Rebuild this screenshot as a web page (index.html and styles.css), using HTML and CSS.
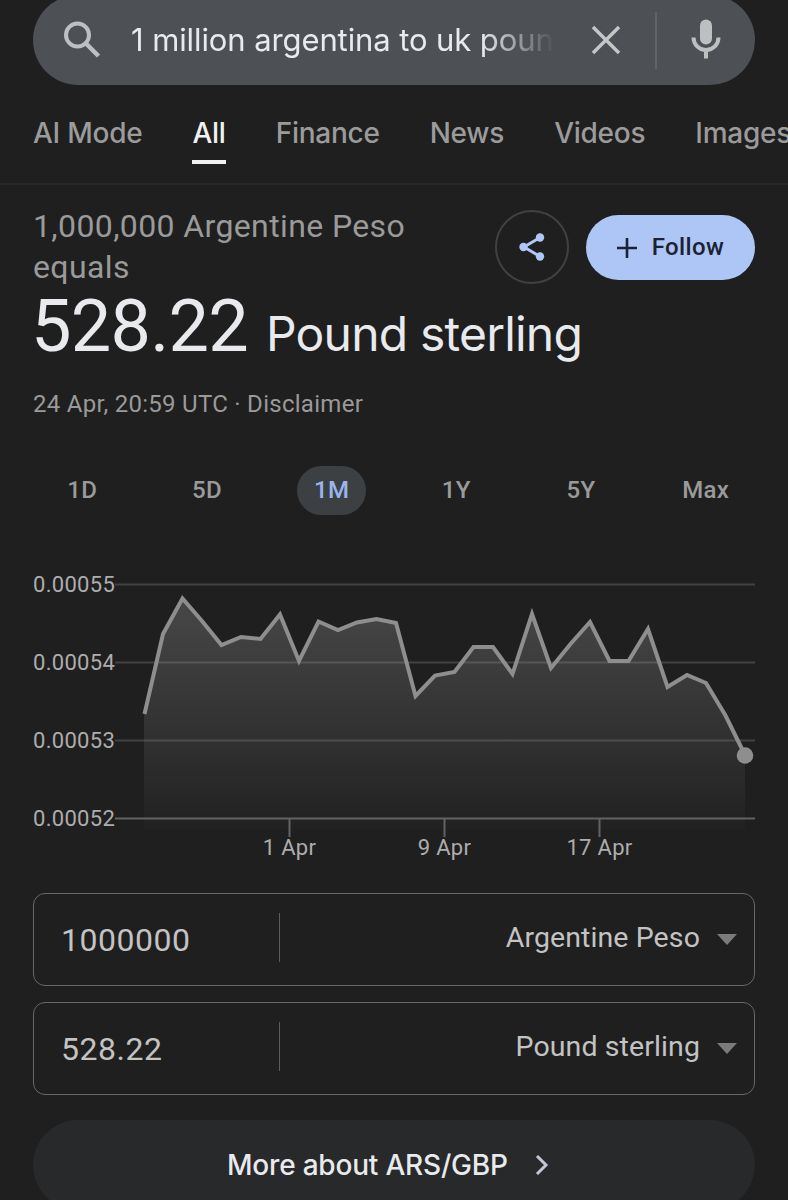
FILE: index.html
```
<!DOCTYPE html>
<html lang="en">
<head>
    <meta charset="UTF-8">
    <meta name="viewport" content="width=device-width, initial-scale=1.0">
    <title>1 million argentina to uk pound</title>
    <link rel="stylesheet" href="styles.css">
</head>
<body>
    <div class="search">
        <svg class="search-icon" width="38" height="38" viewBox="0 0 38 38">
            <circle cx="14.5" cy="14" r="11.5" fill="none" stroke="#bdbfc1" stroke-width="4"/>
            <path d="M22.5 22L35.500 35" stroke="#bdbfc1" stroke-width="4.5"/>
        </svg>
        <div class="query">1 million argentina to uk pound</div>
        <svg class="clear" width="30" height="30" viewBox="0 0 30 30">
            <path d="M2 2L28 28M28 2L2 28" stroke="#c4c6c8" stroke-width="3.4"/>
        </svg>
        <div class="search-line"></div>
        <svg class="mic" width="30" height="40" viewBox="0 0 30 40">
            <rect x="9" y="-0.5" width="12" height="25" rx="6" fill="#bdbfc1"/>
            <path d="M2.5 17.5a12.5 12.5 0 0 0 25 0M15 30v8.500" fill="none" stroke="#bdbfc1" stroke-width="4"/>
        </svg>
    </div>

    <nav class="tabs">
        <a class="tab">AI Mode</a>
        <a class="tab active">All</a>
        <a class="tab">Finance</a>
        <a class="tab">News</a>
        <a class="tab">Videos</a>
        <a class="tab">Images</a>
    </nav>

    <main class="content">
        <div class="top">
            <div class="from">1,000,000 Argentine Peso equals</div>
            <button class="share">
                <svg width="26" height="28" viewBox="0 0 26 28">
                    <path d="M21 4.500L5 14L21 23.500" fill="none" stroke="#aec7f7" stroke-width="3"/>
                    <circle cx="21" cy="4.500" r="4.200" fill="#aec7f7"/>
                    <circle cx="4.500" cy="14" r="4.200" fill="#aec7f7"/>
                    <circle cx="21" cy="23.500" r="4.200" fill="#aec7f7"/>
                </svg>
            </button>
            <button class="follow">
                <svg width="20" height="20" viewBox="0 0 20 20">
                    <path d="M10 0v20M0 10h20" stroke="#1b2233" stroke-width="2.600"/>
                </svg>
                <span>Follow</span>
            </button>
        </div>
        <div class="result"><span class="amount">528.22</span><span class="currency">Pound sterling</span></div>
        <div class="date">24 Apr, 20:59 UTC · Disclaimer</div>

        <div class="ranges">
            <div class="range">1D</div>
            <div class="range">5D</div>
            <div class="range selected">1M</div>
            <div class="range">1Y</div>
            <div class="range">5Y</div>
            <div class="range">Max</div>
        </div>

        <svg class="chart" width="722" height="310" viewBox="33 560 722 310">
            <defs>
                <linearGradient id="fade" gradientUnits="userSpaceOnUse" x1="0" y1="598" x2="0" y2="830">
                    <stop offset="0" stop-color="#8f8f8f" stop-opacity="0.36"/>
                    <stop offset="1" stop-color="#8f8f8f" stop-opacity="0.02"/>
                </linearGradient>
            </defs>
            <!-- grid -->
            <path d="M115 584.500H755M115 662.500H755M115 740.500H755" stroke="#414244" stroke-width="2"/>
            <!-- area and line -->
            <path fill="url(#fade)" d="M144 830V713L163 634L182.500 598.500L202 621L221.500 645L241 637L260.500 639L280 614.500L299 661L318.500 621.500L338 630L357 622.500L376.500 619L396 623L415.500 696L435 675.500L454.500 672L473.500 647L493 647L512.500 674L532 614L551 668L570.500 644L590 622L609.500 661L628.500 661L648 629L667.500 687L687 675L706 683L725.500 715.500L745 755V830Z"/>
            <path d="M115 818.500H755M289.500 819V837M444.500 819V837M599.500 819V837" fill="none" stroke="#636363" stroke-width="2"/>
            <path class="line" d="M144.500 714L163 634L182.500 598.500L202 621L221.500 645L241 637L260.500 639L280 614.500L299 661L318.500 621.500L338 630L357 622.500L376.500 619L396 623L415.500 696L435 675.500L454.500 672L473.500 647L493 647L512.500 674L532 614L551 668L570.500 644L590 622L609.500 661L628.500 661L648 629L667.500 687L687 675L706 683L725.500 715.500L745 755"/>
            <circle cx="745" cy="755.500" r="8.300" fill="#8e8e8e"/>
            <g class="y-labels">
                <text x="33" y="592">0.00055</text>
                <text x="33" y="670">0.00054</text>
                <text x="33" y="748">0.00053</text>
                <text x="33" y="826">0.00052</text>
            </g>
            <g class="x-labels">
                <text x="289.500" y="855">1 Apr</text>
                <text x="444.500" y="855">9 Apr</text>
                <text x="599.500" y="855">17 Apr</text>
            </g>
        </svg>

        <div class="field">
            <div class="value">1000000</div>
            <div class="unit">Argentine Peso</div>
            <svg width="20" height="12" viewBox="0 0 20 12"><path d="M0 0H20L10 11Z" fill="#7b7b7b"/></svg>
        </div>
        <div class="field">
            <div class="value">528.22</div>
            <div class="unit">Pound sterling</div>
            <svg width="20" height="12" viewBox="0 0 20 12"><path d="M0 0H20L10 11Z" fill="#7b7b7b"/></svg>
        </div>

        <div class="more">
            <span>More about ARS/GBP</span>
            <svg width="14" height="22" viewBox="0 0 14 22"><path d="M2 2L11 11L2 20" fill="none" stroke="#c3c6d6" stroke-width="3"/></svg>
        </div>
    </main>
</body>
</html>
```
FILE: styles.css
```
*{
  box-sizing: border-box;
}
html{
  overflow: hidden;
}
body{
  margin: 0;
  height: 1200px;
  overflow: hidden;
  background-color: #1f1f1f;
  font-family: Roboto, sans-serif;
  color: #e8eaed;
}
/* search bar */
.search{
  display: flex;
  align-items: center;
  height: 90px;
  margin: -5px 33px 0;
  padding: 0 34px 0 30px;
  border-radius: 45px;
  background-color: #4d5156;
}
.search svg{
  flex: none;
}
.query{
  width: 426px;
  margin-left: 30px;
  overflow: hidden;
  white-space: nowrap;
  font-family: Inter, sans-serif;
  font-size: 31px;
  line-height: 50px;
  letter-spacing: -0.1px;
  -webkit-mask-image: linear-gradient(to right, #000 350px, transparent 424px);
  mask-image: linear-gradient(to right, #000 350px, transparent 424px);
}
.clear{
  margin-left: 34px;
}
.search-line{
  width: 2px;
  height: 57px;
  margin-left: 34px;
  background-color: #606468;
}
.mic{
  margin-left: 34px;
  overflow: visible;
}
/* tabs */
.tabs{
  display: flex;
  gap: 50px;
  height: 100px;
  padding: 26px 0 0 33px;
  border-bottom: 2px solid #27272c;
  overflow: hidden;
  white-space: nowrap;
}
.tab{
  height: 53px;
  font-family: Inter, sans-serif;
  font-size: 28px;
  font-weight: 500;
  line-height: 45px;
  letter-spacing: -0.25px;
  color: #9b9b9b;
}
.active{
  color: #f1f1f1;
  border-bottom: 4px solid #f1f1f1;
}
/* conversion */
.content{
  padding: 0 33px;
}
.top{
  display: flex;
  height: 103px;
  padding-top: 21px;
}
.from{
  width: 462px;
  padding-right: 60px;
  font-size: 32px;
  line-height: 41px;
  letter-spacing: 0.38px;
  color: #9a9a9a;
}
button{
  display: flex;
  align-items: center;
  justify-content: center;
  padding: 0;
  border: none;
}
.share{
  width: 74px;
  height: 74px;
  margin-top: 4px;
  border: 2px solid #414141;
  border-radius: 50%;
  background: none;
}
.follow{
  gap: 15px;
  width: 169px;
  height: 65px;
  margin: 9px 0 0 17px;
  border-radius: 33px;
  background-color: #aec6f6;
  color: #1b2233;
  font-family: Roboto, sans-serif;
  font-size: 24px;
  font-weight: 500;
  letter-spacing: 0.4px;
}
.follow span{
  margin-top: -2px;
}
.result{
  display: flex;
  align-items: baseline;
  height: 84px;
  font-family: Inter, sans-serif;
  line-height: 78px;
}
.amount{
  width: 235px;
  margin-left: -2px;
  font-family: Roboto, sans-serif;
  font-size: 72px;
  letter-spacing: -0.7px;
}
.currency{
  font-size: 48px;
  letter-spacing: -0.8px;
}
.date{
  margin-top: 17px;
  font-size: 24px;
  line-height: 30px;
  letter-spacing: 0.28px;
  color: #9a9a9a;
}
.ranges{
  display: grid;
  grid-template-columns: repeat(6, 1fr);
  justify-items: center;
  margin: 47px -13px 0;
}
.range{
  padding: 0 17px;
  border-radius: 25px;
  font-size: 24px;
  font-weight: 500;
  line-height: 49px;
  letter-spacing: 0.3px;
  color: #9a9a9a;
}
.selected{
  background-color: #3c4043;
  color: #9ab5ee;
}
/* chart */
.chart{
  display: block;
  margin-top: 45px;
  font-size: 22px;
  letter-spacing: 0.3px;
}
.line{
  fill: none;
  stroke: #8e8e8e;
  stroke-width: 4;
}
.y-labels{
  fill: #adadad;
}
.x-labels{
  fill: #adadad;
  text-anchor: middle;
}
/* currency fields */
.field{
  display: flex;
  align-items: center;
  height: 93px;
  margin-bottom: 16px;
  padding: 0 17px 0 27px;
  border: 1.5px solid #66676b;
  border-radius: 12px;
  color: #c3c3c3;
}
.chart + .field{
  margin-top: 23px;
}
.value{
  width: 219px;
  height: 49px;
  margin-top: -4px;
  border-right: 1px solid #5c5c5c;
  font-size: 32px;
  line-height: 55px;
  letter-spacing: 0.5px;
}
.unit{
  flex: 1;
  margin: -4px 17px 0 0;
  text-align: right;
  font-size: 28.5px;
  letter-spacing: 0.1px;
}
.more{
  display: flex;
  align-items: center;
  gap: 27px;
  height: 90px;
  margin-top: 25px;
  padding-left: 194px;
  border-radius: 45px;
  background-color: #28292b;
  font-family: Inter, sans-serif;
  font-size: 28px;
  font-weight: 500;
  letter-spacing: -0.2px;
}
```
